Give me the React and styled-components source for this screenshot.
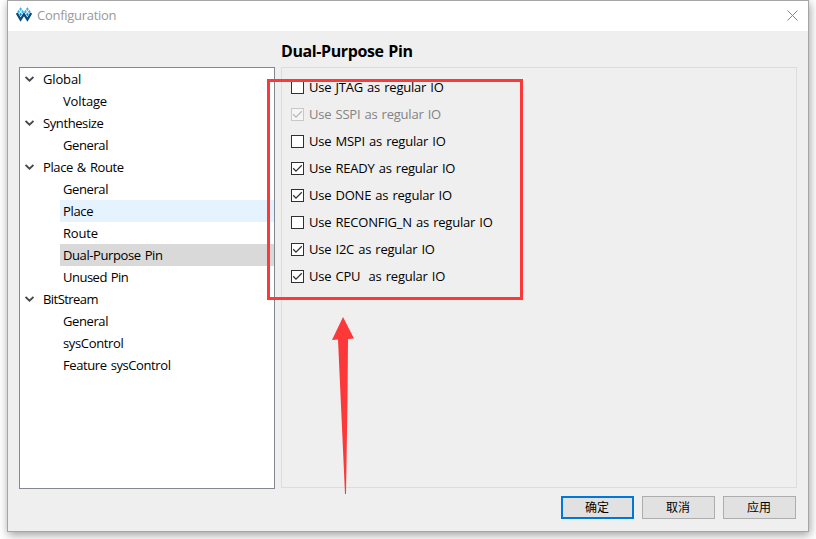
import React from 'react';
import styled, { createGlobalStyle } from 'styled-components';

const GlobalStyle = createGlobalStyle`
  *, *::before, *::after { box-sizing: border-box; }
  body {
    margin: 0;
    background: #fff;
    color: #000;
    font: 13px/22px "Open Sans", "Noto Sans CJK SC", sans-serif;
    overflow: hidden;
  }
`;

const Desktop = styled.div`
  position: relative;
  width: 816px;
  height: 539px;
  padding-left: 7px;
  overflow: hidden;
`;

const Window = styled.div`
  display: flex;
  flex-direction: column;
  width: 802px;
  height: 532px;
  border: 1px solid #a5a5a5;
  background: #efefef;
  box-shadow: 1px 3px 9px rgba(0, 0, 0, 0.38);
`;

const TitleBar = styled.header`
  display: flex;
  align-items: center;
  flex: none;
  height: 30px;
  padding: 0 10px 2px 8px;
  background: #fff;
  color: #999;
`;

const Title = styled.span`
  flex: 1;
  margin-left: 5px;
  letter-spacing: -0.28px;
`;

const Text = styled.span`
  white-space: pre;
  letter-spacing: ${(p) => p.$spacing || 0}px;
  word-spacing: 1px;
`;

const Body = styled.div`
  display: grid;
  grid-template-columns: 256px 516px;
  column-gap: 6px;
  height: 458px;
  padding: 36px 0 0 11px;
`;

const Tree = styled.nav`
  height: 422px;
  border: 1px solid #828790;
  background: #fff;
`;

const Row = styled.div`
  display: flex;
  align-items: center;
  height: 22px;
`;

const Branch = styled(Row)`
  padding-left: 5px;
  gap: 9px;
`;

const Leaf = styled(Row)`
  margin-left: 40px;
  padding-left: 3px;
  background: ${(p) => (p.$state === 'hover' ? '#e5f3ff' : p.$state === 'selected' ? '#d9d9d9' : 'transparent')};
`;

const Panel = styled.section`
  margin-top: -28px;
`;

const Heading = styled.h1`
  height: 28px;
  margin: 0;
  font-size: 16px;
  line-height: 25px;
  font-weight: 700;
  letter-spacing: -0.4px;
  word-spacing: 1px;
`;

const Group = styled.div`
  height: 421px;
  padding: 6px 0 0 9px;
  border: 1px solid #dcdcdc;
`;

const Option = styled.div`
  display: flex;
  align-items: center;
  gap: 5px;
  height: 27px;
  color: ${(p) => (p.$disabled ? '#838383' : '#000')};
`;

const OptionText = styled(Text)`
  padding-bottom: 2px;
`;

const Box = styled.span`
  display: flex;
  width: 13px;
  height: 13px;
  border: 1px solid ${(p) => (p.$disabled ? '#c8c8c8' : '#303030')};
  background: ${(p) => (p.$disabled ? '#f5f5f5' : '#fff')};
  color: ${(p) => (p.$disabled ? '#b8b8b8' : '#303030')};
`;

const Footer = styled.footer`
  display: flex;
  justify-content: flex-end;
  gap: 8px;
  padding: 7px 12px 0 0;
`;

const Button = styled.button`
  width: 73px;
  height: 23px;
  padding: 0 1px 2px 0;
  border: ${(p) => (p.$primary ? '2px solid #0078d7' : '1px solid #adadad')};
  background: #e1e1e1;
  color: #000;
  font: 12px/17px "Noto Sans CJK SC", sans-serif;
`;

const Highlight = styled.div`
  position: absolute;
  left: 267px;
  top: 79px;
  width: 256px;
  height: 221px;
  border: 3px solid #fd3838;
`;

const Arrow = styled.svg`
  position: absolute;
  left: 330px;
  top: 315px;
`;

const Logo = () => (
  <svg width="16" height="16" viewBox="0 0 16 16">
    <path
      d="M4.6.2 6 2.1 4.6 4 3.2 2.1zM11.4.2l1.4 1.9L11.4 4 10 2.1zM2.7 2.8l1.4 1.9-1.4 1.9-1.4-1.9zM6.5 2.8l1.4 1.9-1.4 1.9-1.4-1.9zM9.5 2.8l1.4 1.9-1.4 1.9-1.4-1.9zM13.3 2.8l1.4 1.9-1.4 1.9-1.4-1.9z"
      fill="#2eb4ee"
    />
    <path d="M4.6 5.4 6 7.3 4.6 9.2 3.2 7.3zM11.4 5.4l1.4 1.9-1.4 1.9L10 7.3z" fill="#1d8fc9" />
    <path d="M.8 6 4.6 12.6 8 7.2l3.4 5.4L15.2 6" stroke="#0c4b7c" strokeWidth="2.3" fill="none" />
  </svg>
);

const Chevron = () => (
  <svg width="9" height="7" viewBox="0 0 9 7">
    <path d="M.5 1 4.5 4.8 8.5 1" fill="none" stroke="#484848" strokeWidth="1.9" />
  </svg>
);

const Check = () => (
  <svg width="11" height="11" viewBox="0 0 11 11">
    <path d="M1.2 5.2 4 8.1 9.8 2.3" fill="none" stroke="currentColor" strokeWidth="1.25" />
  </svg>
);

const Close = () => (
  <svg width="11" height="11" viewBox="0 0 11 11">
    <path d="M.5.5l10 10m0-10-10 10" stroke="#858585" strokeWidth="1" />
  </svg>
);

const tree = [
  { label: 'Global', spacing: -0.15, children: [{ label: 'Voltage', spacing: -0.15 }] },
  { label: 'Synthesize', spacing: -0.4, children: [{ label: 'General', spacing: -0.4 }] },
  {
    label: 'Place & Route',
    spacing: -0.4,
    children: [
      { label: 'General', spacing: -0.4 },
      { label: 'Place', spacing: -0.35, state: 'hover' },
      { label: 'Route', spacing: -0.2 },
      { label: 'Dual-Purpose Pin', spacing: -0.4, state: 'selected' },
      { label: 'Unused Pin', spacing: -0.5 },
    ],
  },
  {
    label: 'BitStream',
    spacing: -0.55,
    children: [
      { label: 'General', spacing: -0.4 },
      { label: 'sysControl', spacing: -0.35 },
      { label: 'Feature sysControl', spacing: -0.4 },
    ],
  },
];

const options = [
  { label: 'Use JTAG as regular IO' },
  { label: 'Use SSPI as regular IO', checked: true, disabled: true },
  { label: 'Use MSPI as regular IO' },
  { label: 'Use READY as regular IO', checked: true },
  { label: 'Use DONE as regular IO', checked: true },
  { label: 'Use RECONFIG_N as regular IO' },
  { label: 'Use I2C as regular IO', checked: true },
  { label: 'Use CPU  as regular IO', checked: true },
];

export default function App() {
  return (
    <Desktop>
      <GlobalStyle />
      <Window>
        <TitleBar>
          <Logo />
          <Title>Configuration</Title>
          <Close />
        </TitleBar>
        <Body>
          <Tree>
            {tree.map((branch) => (
              <React.Fragment key={branch.label}>
                <Branch>
                  <Chevron />
                  <Text $spacing={branch.spacing}>{branch.label}</Text>
                </Branch>
                {branch.children.map((leaf) => (
                  <Leaf key={leaf.label} $state={leaf.state}>
                    <Text $spacing={leaf.spacing}>{leaf.label}</Text>
                  </Leaf>
                ))}
              </React.Fragment>
            ))}
          </Tree>
          <Panel>
            <Heading>Dual-Purpose Pin</Heading>
            <Group>
              {options.map((o) => (
                <Option key={o.label} $disabled={o.disabled}>
                  <Box $disabled={o.disabled}>{o.checked && <Check />}</Box>
                  <OptionText $spacing={-0.22}>{o.label}</OptionText>
                </Option>
              ))}
            </Group>
          </Panel>
        </Body>
        <Footer>
          <Button $primary>确定</Button>
          <Button>取消</Button>
          <Button>应用</Button>
        </Footer>
      </Window>
      <Highlight />
      <Arrow width="32" height="182" viewBox="0 0 32 182">
        <path d="M13 2 24 23.5 18 24 17.5 85 16 179H15L8 24.5 2 25z" fill="#fd3838" />
      </Arrow>
    </Desktop>
  );
}
